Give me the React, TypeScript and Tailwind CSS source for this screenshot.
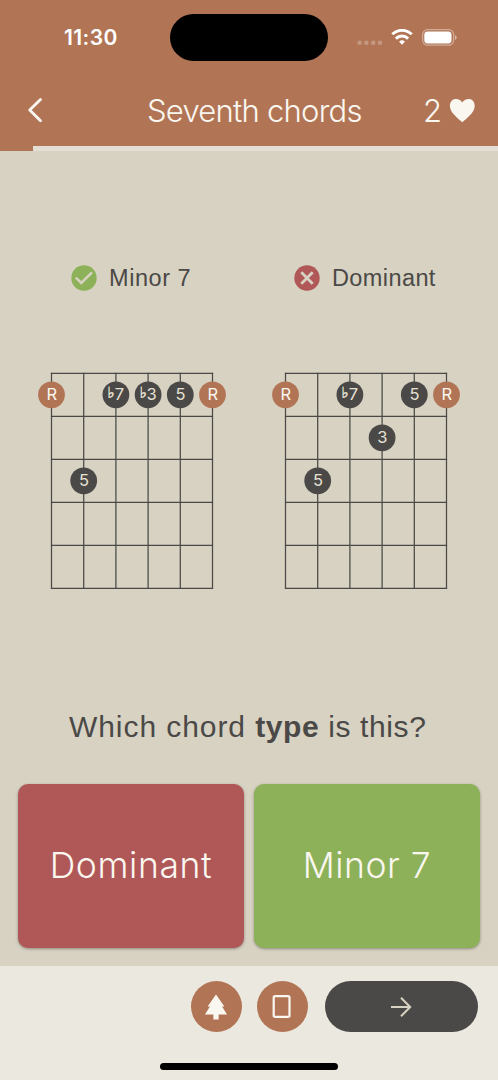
type Note = { string: number; fret: number; label: string; root?: boolean; flat?: boolean };

const MINOR_SEVEN: Note[] = [
  { string: 0, fret: 0, label: "R", root: true },
  { string: 2, fret: 0, label: "7", flat: true },
  { string: 3, fret: 0, label: "3", flat: true },
  { string: 4, fret: 0, label: "5" },
  { string: 5, fret: 0, label: "R", root: true },
  { string: 1, fret: 2, label: "5" },
];

const DOMINANT: Note[] = [
  { string: 0, fret: 0, label: "R", root: true },
  { string: 2, fret: 0, label: "7", flat: true },
  { string: 4, fret: 0, label: "5" },
  { string: 5, fret: 0, label: "R", root: true },
  { string: 3, fret: 1, label: "3" },
  { string: 1, fret: 2, label: "5" },
];

const STRING_GAP = 32.2;
const FRET_GAP = 43;

function ChordDiagram({ notes }: { notes: Note[] }) {
  return (
    <svg width="190" height="218" viewBox="-14.5 -1.3 190 218" className="block shrink-0">
      <g stroke="#4a4947" strokeWidth="1.25">
        {[0, 1, 2, 3, 4, 5].map((i) => (
          <line key={"s" + i} x1={i * STRING_GAP} x2={i * STRING_GAP} y1={-0.6} y2={FRET_GAP * 5 + 0.6} />
        ))}
        {[0, 1, 2, 3, 4, 5].map((i) => (
          <line key={"f" + i} x1={-0.6} x2={STRING_GAP * 5 + 0.6} y1={i * FRET_GAP} y2={i * FRET_GAP} />
        ))}
      </g>
      {notes.map((n, i) => {
        const x = n.string * STRING_GAP;
        const y = (n.fret + 0.5) * FRET_GAP;
        return (
          <g key={i}>
            <circle cx={x} cy={y} r="13.4" fill={n.root ? "#b17556" : "#4a4947"} />
            {n.flat && (
              <text x={x - 8.4} y={y + 3.4} fontSize="15" fill="#e6e1d4" stroke="#e6e1d4" strokeWidth="0.5" className="font-['DejaVu_Sans',sans-serif]">
                ♭
              </text>
            )}
            <text
              x={n.flat ? x + 3.6 : x + 0.2}
              y={y + 5.7}
              fontSize="16.5"
              textAnchor="middle"
              fill={n.root ? "#faf7f0" : "#e6e1d4"}
              className="font-['Inter',sans-serif]"
            >
              {n.label}
            </text>
          </g>
        );
      })}
    </svg>
  );
}

function StatusBar() {
  return (
    <div className="flex h-[74px] items-start">
      <div className="w-[170px] pt-[24px] pl-[64px] text-[21px] leading-[28px] font-semibold tracking-[0.4px] text-white">
        11:30
      </div>
      <div className="mt-[14px] h-[47px] w-[158px] rounded-full bg-black" />
      <div className="flex h-[74px] items-center pl-[29px]">
        <svg width="26" height="6" viewBox="0 0 26 6" className="mt-[12px]" fill="#fff" fillOpacity="0.25">
          <circle cx="2.6" cy="2.8" r="2.3" />
          <circle cx="9.4" cy="2.8" r="2.3" />
          <circle cx="16.2" cy="2.8" r="2.3" />
          <circle cx="22.9" cy="2.8" r="2.3" />
        </svg>
        <svg width="22" height="16" viewBox="0 0 22 16" className="ml-[8px]" fill="none" stroke="#fff" strokeWidth="3">
          <path d="M1.3 5.3a13.8 13.8 0 0 1 19.4 0" />
          <path d="M4.9 9.6a8.6 8.6 0 0 1 12.2 0" />
          <path d="M11 15.7l-2.900-2.900a4.100 4.100 0 0 1 5.800 0z" fill="#fff" stroke="none" />
        </svg>
        <svg width="36" height="17" viewBox="0 0 36 17" className="ml-[9px]" fill="none">
          <rect x="0.6" y="0.6" width="31" height="15.6" rx="5" stroke="#fff" strokeOpacity="0.4" strokeWidth="1.2" />
          <rect x="2.3" y="2.4" width="27.2" height="12" rx="3.4" fill="#fff" />
          <path d="M33 6v5a2.7 2.7 0 0 0 0-5z" fill="#fff" fillOpacity="0.5" />
        </svg>
      </div>
    </div>
  );
}

function Header() {
  return (
    <header className="h-[151px] shrink-0 bg-[#b17556]">
      <StatusBar />
      <div className="flex h-[72px] items-center text-[#faf7f0]">
        <div className="w-[147px] pl-[27px]">
          <svg width="17" height="26" viewBox="0 0 17 26" fill="none" stroke="currentColor" strokeWidth="2.8" strokeLinecap="round" strokeLinejoin="round">
            <path d="M13.5 2.4L2.7 13L13.5 23.8" />
          </svg>
        </div>
        <h1 className="w-[276px] pt-[2px] text-[31px] leading-[40px] font-[350] tracking-[-0.75px] whitespace-nowrap">Seventh chords</h1>
        <span className="w-[26px] pt-[2px] text-[31px] leading-[40px] font-[350]">2</span>
        <svg width="27" height="25" viewBox="0 0 27 25" fill="currentColor">
          <path d="M13.3 24.2C9.4 20.8 1 14.4.9 8.2C.8 3.8 3.4 1.1 7 1.1c2.7 0 5 1.2 6.3 3.5C14.6 2.3 16.9 1.1 19.6 1.1c3.6 0 6.2 2.7 6.1 7.1C25.6 14.4 17.2 20.8 13.3 24.2z" />
        </svg>
      </div>
      <div className="flex h-[5px]">
        <div className="w-[33px]" />
        <div className="flex-1 bg-[#e3ded4]" />
      </div>
    </header>
  );
}

export default function App() {
  return (
    <div className="flex h-[1080px] w-[498px] flex-col overflow-hidden bg-[#d8d2c2] font-['Inter',sans-serif] text-[#4a4947]">
      <Header />
      <main className="flex h-[815px] shrink-0 flex-col">
        <div className="mt-[111px] flex h-[32px] items-center font-['Liberation_Sans',sans-serif] text-[23.5px] leading-[32px]">
          <div className="flex w-[223px] items-center pl-[71px]">
            <svg width="26" height="26" viewBox="0 0 26 26" fill="none">
              <circle cx="13" cy="13" r="12.7" fill="#8db159" />
              <path d="M4.8 12.6L10.3 18L21 7.4" stroke="#d8d2c2" strokeWidth="2.5" />
            </svg>
            <span className="ml-[12px] tracking-[0.55px] whitespace-nowrap">Minor 7</span>
          </div>
          <div className="flex items-center pl-[71px]">
            <svg width="26" height="26" viewBox="0 0 26 26" fill="none">
              <circle cx="13" cy="13" r="12.7" fill="#b05757" />
              <path d="M7.3 7.3l11.4 11.4M18.7 7.3l-11.4 11.4" stroke="#d8d2c2" strokeWidth="2.8" />
            </svg>
            <span className="ml-[12px] tracking-[0.4px] whitespace-nowrap">Dominant</span>
          </div>
        </div>
        <div className="mt-[78px] flex gap-[44px] pl-[37px]">
          <ChordDiagram notes={MINOR_SEVEN} />
          <ChordDiagram notes={DOMINANT} />
        </div>
        <p className="mt-[117px] h-[40px] pl-[69px] font-['Liberation_Sans',sans-serif] text-[30px] leading-[40px] tracking-[0.6px] whitespace-nowrap">
          <span className="tracking-[0.93px]">Which chord </span>
          <b>type</b> is this?
        </p>
        <div className="mt-[37px] flex gap-[10px] px-[18px] text-[35.5px] font-[350] text-[#faf7f0]">
          <button className="h-[164px] flex-1 rounded-[10px] bg-[#b05757] tracking-[0.6px] shadow-[0_1px_3px_rgba(0,0,0,0.35)]">Dominant</button>
          <button className="h-[164px] flex-1 rounded-[10px] bg-[#8db159] tracking-[0.5px] shadow-[0_1px_3px_rgba(0,0,0,0.35)]">Minor 7</button>
        </div>
      </main>
      <footer className="flex h-[114px] flex-col bg-[#ebe8df]">
        <div className="mt-[15px] flex h-[51px] pl-[190.5px]">
          <button className="flex size-[51px] items-center justify-center rounded-full bg-[#b17556]">
            <svg width="24" height="26" viewBox="0 0 24 26" fill="#faf7f0">
              <path d="M12 .5L20.4 12.6h-2.3L23 20.4H14.6v5.2H9.4V20.4H1L5.9 12.6H3.6z" />
            </svg>
          </button>
          <button className="ml-[15px] flex size-[51px] items-center justify-center rounded-full bg-[#b17556]">
            <svg width="20" height="24" viewBox="0 0 20 24" fill="none" stroke="#faf7f0" strokeWidth="2.2">
              <rect x="1.7" y="1.1" width="15.8" height="20.8" rx="1.5" />
            </svg>
          </button>
          <button className="ml-[17.5px] flex h-[51px] w-[153px] items-center justify-center rounded-full bg-[#4a4947] pr-[1px]">
            <svg width="22" height="22" viewBox="0 0 22 22" fill="none" stroke="#d8d2c2" strokeWidth="2">
              <path d="M1 11H20M11 1.8L20.2 11L11 20.2" />
            </svg>
          </button>
        </div>
        <div className="mt-[31px] ml-[160px] h-[7px] w-[178px] rounded-full bg-black" />
      </footer>
    </div>
  );
}
